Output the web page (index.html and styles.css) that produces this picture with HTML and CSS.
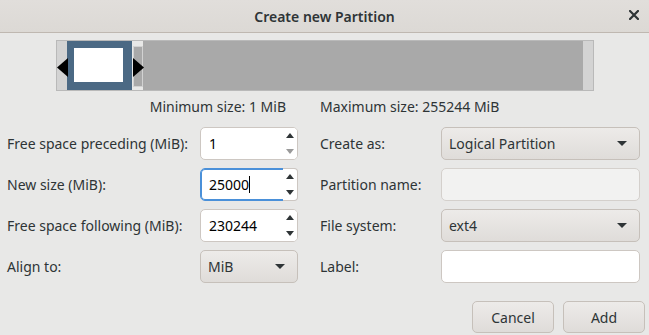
FILE: index.html
```html
<!DOCTYPE html>
<html>
<head>
<meta charset="utf-8">
<link rel="stylesheet" href="styles.css">
</head>
<body>
<div class="dialog">
  <header class="titlebar">
    <span class="title">Create new Partition</span>
    <span class="close">
      <svg width="10" height="10" viewBox="0 0 10 10"><path d="M1 1 L9 9 M9 1 L1 9" stroke="#2e3436" stroke-width="2.2" stroke-linecap="square"/></svg>
    </span>
  </header>

  <section class="bar-wrap">
    <div class="bar">
      <div class="strip"></div>
      <div class="part"><div class="inner"></div></div>
      <div class="handle"></div>
      <div class="free"></div>
      <div class="strip"></div>
      <svg class="arrow arrow-left" width="11" height="19" viewBox="0 0 11 19"><path d="M11 0 L0 9.5 L11 19 Z" fill="#000"/></svg>
      <svg class="arrow arrow-right" width="11" height="19" viewBox="0 0 11 19"><path d="M0 0 L11 9.5 L0 19 Z" fill="#000"/></svg>
    </div>
    <div class="limits">
      <span>Minimum size: 1 MiB</span>
      <span>Maximum size: 255244 MiB</span>
    </div>
  </section>

  <section class="form">
    <label class="lbl">Free space preceding (MiB):</label>
    <div class="spin"><span class="val">1</span><span class="btns"><span class="up"><svg width="8" height="5" viewBox="0 0 8 5"><path d="M0 5 L4 0 L8 5 Z"/></svg></span><span class="down dim"><svg width="8" height="5" viewBox="0 0 8 5"><path d="M0 0 L4 5 L8 0 Z"/></svg></span></span></div>
    <span></span>
    <label class="lbl">Create as:</label>
    <div class="combo"><span>Logical Partition</span><svg class="caret" width="10" height="5" viewBox="0 0 10 5"><path d="M0 0 L5 5 L10 0 Z"/></svg></div>

    <label class="lbl">New size (MiB):</label>
    <div class="spin focus"><span class="val">25000<span class="cursor"></span></span><span class="btns"><span class="up"><svg width="8" height="5" viewBox="0 0 8 5"><path d="M0 5 L4 0 L8 5 Z"/></svg></span><span class="down"><svg width="8" height="5" viewBox="0 0 8 5"><path d="M0 0 L4 5 L8 0 Z"/></svg></span></span></div>
    <span></span>
    <label class="lbl">Partition name:</label>
    <div class="entry disabled"></div>

    <label class="lbl">Free space following (MiB):</label>
    <div class="spin"><span class="val">230244</span><span class="btns"><span class="up"><svg width="8" height="5" viewBox="0 0 8 5"><path d="M0 5 L4 0 L8 5 Z"/></svg></span><span class="down"><svg width="8" height="5" viewBox="0 0 8 5"><path d="M0 0 L4 5 L8 0 Z"/></svg></span></span></div>
    <span></span>
    <label class="lbl">File system:</label>
    <div class="combo"><span>ext4</span><svg class="caret" width="10" height="5" viewBox="0 0 10 5"><path d="M0 0 L5 5 L10 0 Z"/></svg></div>

    <label class="lbl">Align to:</label>
    <div class="combo"><span>MiB</span><svg class="caret" width="10" height="5" viewBox="0 0 10 5"><path d="M0 0 L5 5 L10 0 Z"/></svg></div>
    <span></span>
    <label class="lbl">Label:</label>
    <div class="entry"></div>
  </section>

  <footer class="actions">
    <button class="btn">Cancel</button>
    <button class="btn">Add</button>
  </footer>
</div>
</body>
</html>
```

FILE: styles.css
```css
html, body {
  margin: 0;
  padding: 0;
}
body {
  width: 649px;
  height: 335px;
  overflow: hidden;
  background: #e8e8e7;
  font-family: "Noto Sans", "DejaVu Sans", sans-serif;
  font-size: 14px;
  color: #2e3436;
}
.dialog {
  display: flex;
  flex-direction: column;
}
.titlebar {
  position: relative;
  height: 32px;
  display: flex;
  align-items: center;
  justify-content: center;
  background: linear-gradient(#e1dedb, #dcd9d5);
  border-bottom: 1px solid #bfb8b1;
}
.title {
  font-weight: 600;
  font-size: 14px;
  color: #2e3436;
}
.close {
  position: absolute;
  right: 10px;
  top: 10px;
  width: 10px;
  height: 10px;
  display: flex;
}
.bar-wrap {
  display: flex;
  flex-direction: column;
  align-items: center;
  padding-top: 7px;
}
.bar {
  position: relative;
  width: 536px;
  height: 49px;
  border: 1px solid #b9b9b9;
  display: flex;
}
.strip {
  width: 10px;
  background: #d3d3d3;
}
.part {
  width: 65px;
  background: #4b6984;
  display: flex;
  align-items: center;
  justify-content: center;
}
.inner {
  width: 49px;
  height: 34px;
  background: #fff;
  margin-left: -2px;
  margin-top: -1px;
}
.handle {
  width: 8px;
  margin: 5px 0 3px 1px;
  border: 1px solid #d2d2d2;
  background: #a9a9a9;
}
.free {
  flex: 1;
  background: #a9a9a9;
}
.arrow {
  position: absolute;
  top: 17px;
}
.arrow-left { left: 0px; }
.arrow-right { left: 76px; }
.limits {
  display: flex;
  gap: 34px;
  height: 30px;
  align-items: center;
}
.form {
  display: grid;
  grid-template-columns: 193px 98px 22px 121px 199px;
  grid-auto-rows: 33px;
  row-gap: 8px;
  padding-left: 7px;
  margin-top: 6px;
}
.lbl {
  display: flex;
  align-items: center;
}
.spin, .entry, .combo {
  box-sizing: border-box;
  border: 1px solid #cdc7c2;
  border-radius: 5px;
}
.spin {
  display: flex;
  background: #fff;
}
.spin .val {
  flex: 1;
  display: flex;
  align-items: center;
  padding-left: 8px;
  color: #000;
}
.spin.focus {
  border-color: #4a90d9;
  box-shadow: inset 0 0 0 1px #4a90d9;
}
.cursor {
  display: inline-block;
  width: 1px;
  height: 17px;
  background: #000;
}
.btns {
  width: 15px;
  display: flex;
  flex-direction: column;
  background: #fff;
  border-radius: 0 4px 4px 0;
  fill: #2e3436;
}
.spin.focus .btns {
  margin: -1px -1px -1px 0;
  border: 1px solid #cdc7c2;
  border-left: none;
  height: 33px;
  box-sizing: border-box;
}
.btns span {
  flex: 1;
  display: flex;
  align-items: center;
  justify-content: center;
}
.btns .dim { fill: #9a9a9a; }
.combo {
  display: flex;
  align-items: center;
  justify-content: space-between;
  padding: 0 12px 0 7px;
  background: linear-gradient(#edebe9, #dfdcd9);
  border-color: #c6c0ba;
}
.caret {
  fill: #2e3436;
}
.entry {
  background: #fff;
}
.entry.disabled {
  background: #f2f2f1;
  border-color: #d4d0cc;
}
.actions {
  display: flex;
  justify-content: flex-end;
  gap: 9px;
  padding: 18px 4px 0 0;
}
.btn {
  width: 82px;
  height: 32px;
  font-family: inherit;
  font-size: 14px;
  color: #2e3436;
  border: 1px solid #c6c0ba;
  border-radius: 5px;
  background: linear-gradient(#edebe9, #dfdcd9);
  padding: 0;
}
```
